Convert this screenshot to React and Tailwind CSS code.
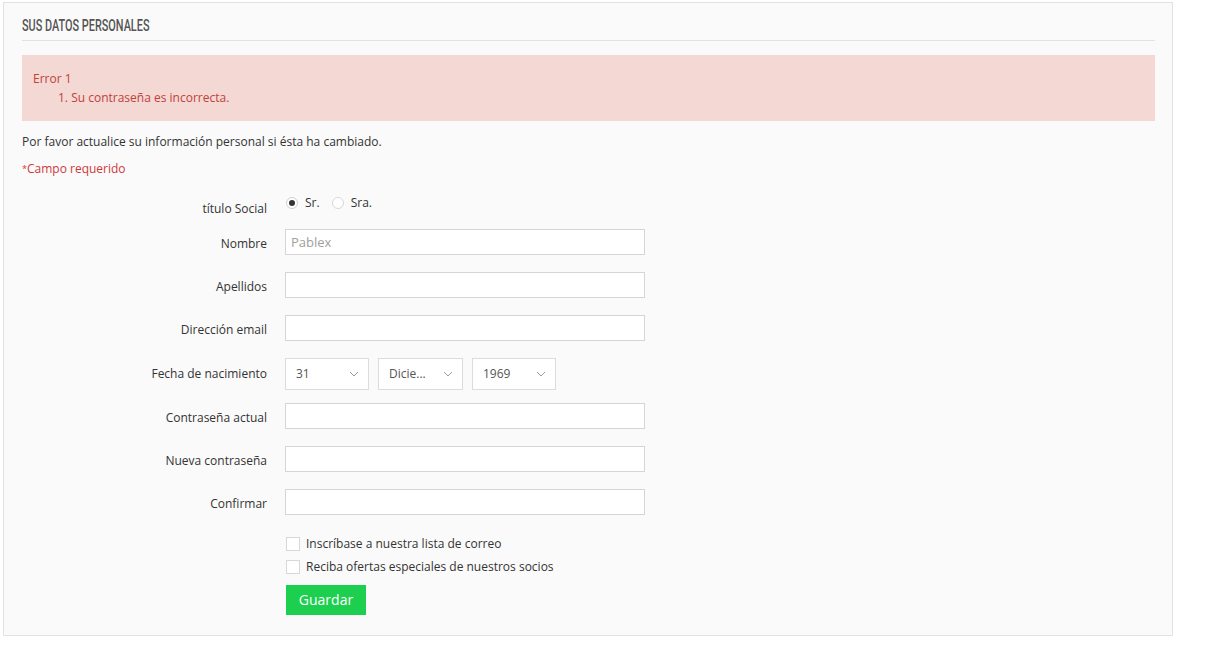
import React from "react";

function TextRow({ label, placeholder, mt }) {
  return (
    <div className={`flex items-center ${mt}`}>
      <label className="w-[245px] shrink-0 text-right leading-[18px] pt-[3px]">{label}</label>
      <div className="ml-[18px]">
        <input
          type="text"
          placeholder={placeholder}
          className="block w-[360px] h-[26px] border border-[#d6d4d4] bg-white px-[5px] text-[13px] text-[#555] placeholder:text-[#a0a0a0] outline-none"
          style={{ fontFamily: "'Open Sans', sans-serif" }}
        />
      </div>
    </div>
  );
}

function Chevron() {
  return (
    <svg width="10" height="6" viewBox="0 0 10 6" className="shrink-0">
      <path d="M1 1 L5 5 L9 1" fill="none" stroke="#9a9a9a" strokeWidth="1" />
    </svg>
  );
}

function FakeSelect({ value, w }) {
  return (
    <div className={`flex items-center justify-between ${w} h-[32px] border border-[#dcdcdc] bg-white pl-[10px] pr-[9px] text-[12px] text-[#555]`}>
      <span>{value}</span>
      <Chevron />
    </div>
  );
}

export default function App() {
  return (
    <div
      className="min-h-[662px] bg-white pt-[2px] pl-[3px] text-[12px] text-[#333]"
      style={{ fontFamily: "'Open Sans', 'Noto Sans', sans-serif" }}
    >
      <div className="w-[1170px] h-[634px] border border-[#e2e2e2] bg-[#fafafa] pl-[18px] pr-[17px] pt-[12px]">
        <div className="pb-[4px] border-b border-[#e2e2e2]">
          <h1
            className="text-[16px] uppercase text-[#555] leading-[20px] pt-[1px] origin-left scale-x-[0.68] whitespace-nowrap"
            style={{ fontFamily: "Roboto, sans-serif", fontWeight: 500 }}
          >
            Sus datos personales
          </h1>
        </div>

        <div className="mt-[14px] bg-[#f3d8d3] py-[14px] px-[11px] text-[#c2413b] leading-[19px]">
          <p>Error 1</p>
          <ol className="pl-[25px]">
            <li>1. Su contraseña es incorrecta.</li>
          </ol>
        </div>

        <p className="mt-[12px] leading-[18px]">Por favor actualice su información personal si ésta ha cambiado.</p>
        <p className="mt-[9px] leading-[18px] text-[#d0383b]">
          <sup className="text-[9px] relative top-[-1px]">*</sup>Campo requerido
        </p>

        <div className="mt-[15px] flex">
          <label className="w-[245px] shrink-0 text-right leading-[18px] pt-[7px]">título Social</label>
          <div className="ml-[19px] mt-[1px] flex items-center h-[18px]">
            <span className="flex items-center gap-[7px]">
              <span className="w-[12px] h-[12px] rounded-full border border-[#cfcfcf] bg-white flex items-center justify-center">
                <span className="w-[6px] h-[6px] rounded-full bg-[#333]"></span>
              </span>
              <span>Sr.</span>
            </span>
            <span className="flex items-center gap-[7px] ml-[12px]">
              <span className="w-[12px] h-[12px] rounded-full border border-[#d8d8d8] bg-white"></span>
              <span>Sra.</span>
            </span>
          </div>
        </div>

        <TextRow label="Nombre" placeholder="Pablex" mt="mt-[11px]" />
        <TextRow label="Apellidos" mt="mt-[17px]" />
        <TextRow label="Dirección email" mt="mt-[17px]" />

        <div className="flex items-center mt-[17px]">
          <label className="w-[245px] shrink-0 text-right leading-[18px]">Fecha de nacimiento</label>
          <div className="ml-[18px] flex gap-[9px]">
            <FakeSelect value="31" w="w-[84px]" />
            <FakeSelect value="Dicie..." w="w-[85px]" />
            <FakeSelect value="1969" w="w-[84px]" />
          </div>
        </div>

        <TextRow label="Contraseña actual" mt="mt-[13px]" />
        <TextRow label="Nueva contraseña" mt="mt-[17px]" />
        <TextRow label="Confirmar" mt="mt-[17px]" />

        <div className="ml-[264px] mt-[17px]">
          <div className="flex items-center h-[23px] gap-[6px]">
            <span className="w-[14px] h-[14px] border border-[#d8d8d8] bg-white"></span>
            <span>Inscríbase a nuestra lista de correo</span>
          </div>
          <div className="flex items-center h-[23px] gap-[6px]">
            <span className="w-[14px] h-[14px] border border-[#d8d8d8] bg-white"></span>
            <span>Reciba ofertas especiales de nuestros socios</span>
          </div>
          <button className="mt-[7px] w-[80px] h-[30px] bg-[#1dcf4e] text-white text-[14px] leading-[30px]">
            Guardar
          </button>
        </div>
      </div>
    </div>
  );
}
